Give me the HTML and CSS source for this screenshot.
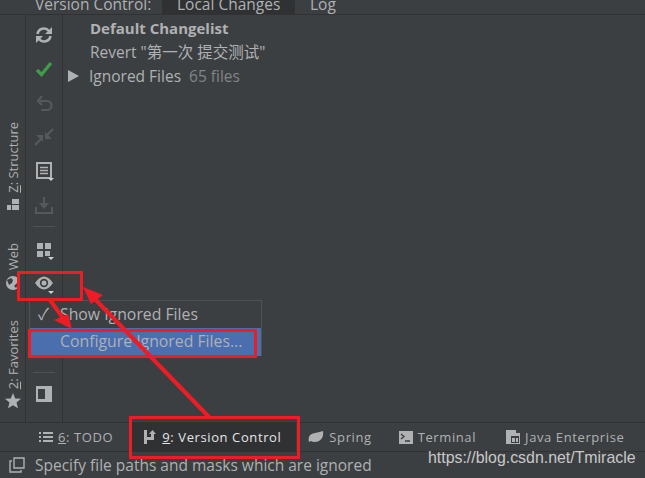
FILE: index.html
```html
<!DOCTYPE html>
<html lang="en">
<head>
<meta charset="utf-8">
<title>Version Control</title>
<link rel="stylesheet" href="styles.css">
</head>
<body>
<div class="ide">
  <header class="tabs">
    <span class="tab-title">Version Control:</span>
    <span class="tab active">Local Changes</span>
    <span class="tab">Log</span>
  </header>
  <div class="middle">
    <aside class="side">
      <div class="side-item structure">
        <svg width="14" height="14" viewBox="0 0 14 14" fill="#afb1b3"><path d="M6 1h7v5H6zM1 7h4v5H1zM6 7h7v5H6z"/></svg>
        <span class="vtext"><u>Z</u>: Structure</span>
      </div>
      <div class="side-item web">
        <svg width="16" height="16" viewBox="0 0 16 16"><circle cx="8" cy="8" r="7" fill="#afb1b3"/><path fill="#3c3f41" d="M2 5l4-2 2 2-1 3-3 2zM9 11l4-4 1 2-3 4z"/></svg>
        <span class="vtext">Web</span>
      </div>
      <div class="side-item favs">
        <svg width="16" height="16" viewBox="0 0 16 16"><path fill="#afb1b3" d="M8 0l2.200 5.400 5.800.4-4.500 3.700 1.500 5.700L8 12.200 3 15.200l1.500-5.700L0 5.800l5.800-.4z"/></svg>
        <span class="vtext"><u>2</u>: Favorites</span>
      </div>
    </aside>
    <nav class="tools">
      <svg width="20" height="20" viewBox="0 0 20 20" fill="none" stroke="#afb1b3" stroke-width="2.600"><path d="M3.500 9a6.500 6.500 0 0 1 11.500-3M16.500 11a6.500 6.500 0 0 1-11.500 3"/><path fill="#afb1b3" stroke="none" d="M18 2v7h-7zM2 18v-7h7z"/></svg>
      <svg width="20" height="20" viewBox="0 0 20 20" fill="none" stroke="#3f9c4b" stroke-width="3.200"><path d="M3 11l4.500 4.500L17 4"/></svg>
      <svg width="20" height="20" viewBox="0 0 20 20" fill="none" stroke="#56595b" stroke-width="2.200"><path d="M6 8h7a4 4 0 0 1 0 9H7"/><path d="M8 3L4 8l4 4"/></svg>
      <svg width="20" height="20" viewBox="0 0 20 20" fill="#56595b"><path d="M9 8v7L2 8zM11 12V5l7 7z"/><path fill="none" stroke="#56595b" stroke-width="2.400" d="M1 18l6-6M19 2l-6 6"/></svg>
      <svg width="20" height="20" viewBox="0 0 20 20" fill="none" stroke="#afb1b3" stroke-width="2"><path d="M3 2h14v15H3z"/><path stroke-width="1.500" d="M6 6.500h8M6 9.500h8M6 12.500h8"/><path fill="#d0d0d0" stroke="none" d="M14 17h6l-3 3z"/></svg>
      <svg width="20" height="20" viewBox="0 0 20 20" fill="none" stroke="#56595b" stroke-width="2"><path d="M2 12v6h16v-6M10 2v9"/><path fill="#56595b" stroke="none" d="M5 8h10l-5 6z"/></svg>
      <span class="sep"></span>
      <svg width="20" height="20" viewBox="0 0 20 20" fill="#afb1b3"><path d="M3 3h6v6H3zM11 3h6v6h-6zM3 11h6v6H3zM11 11h5v5h-5z"/><path fill="#d0d0d0" d="M14 17h6l-3 3z"/></svg>
      <svg width="20" height="20" viewBox="0 0 20 20"><path fill="#afb1b3" d="M1 9q9-13 18 0q-9 13-18 0z"/><circle cx="10" cy="9" r="4.200" fill="#3c3f41"/><circle cx="10" cy="9" r="2.500" fill="#afb1b3"/><path fill="#d0d0d0" d="M14 17h6l-3 3z"/></svg>
      <span class="sep last"></span>
      <svg width="20" height="20" viewBox="0 0 20 20"><path fill="#afb1b3" d="M2 2h16v16H2z"/><path fill="#3c3f41" d="M4 5h7v10H4z"/></svg>
    </nav>
    <main class="tree">
      <div class="row strong">Default Changelist</div>
      <div class="row">Revert "第一次 提交测试"</div>
      <div class="row ignored"><span class="arrow"></span>Ignored Files <span class="dim">65 files</span></div>
    </main>
    <div class="popup">
      <div class="menu-item"><span class="tick">✓</span>Show Ignored Files</div>
      <div class="menu-item selected">Configure Ignored Files...</div>
    </div>
    <span class="mark mark-eye"></span>
    <span class="mark mark-menu"></span>
  </div>
  <div class="toolbar">
    <span class="tool-tab todo">
      <svg width="14" height="12" viewBox="0 0 14 12" fill="#afb1b3"><path d="M0 1h2v2H0zM4 1h10v2H4zM0 5h2v2H0zM4 5h10v2H4zM0 9h2v2H0zM4 9h10v2H4z"/></svg>
      <span><u>6</u>: TODO</span>
    </span>
    <span class="tool-tab vc">
      <svg width="14" height="14" viewBox="0 0 14 14" fill="#afb1b3"><path d="M1 0h3v14H1zM4 7h4V4H6l3.500-4L13 4h-2v6H4z"/></svg>
      <span><u>9</u>: Version Control</span>
    </span>
    <span class="tool-tab">
      <svg width="16" height="12" viewBox="0 0 16 12"><path fill="#afb1b3" d="M1 11Q-1 3 7 2q5-1 8-2 1 7-4 10-5 2-8 0z"/></svg>
      <span>Spring</span>
    </span>
    <span class="tool-tab terminal">
      <svg width="14" height="13" viewBox="0 0 14 13"><path fill="#afb1b3" d="M0 0h14v13H0z"/><path fill="none" stroke="#3c3f41" stroke-width="1.300" d="M2 3l3 2.500L2 8M6 10h5"/></svg>
      <span>Terminal</span>
    </span>
    <span class="tool-tab">
      <svg width="14" height="14" viewBox="0 0 14 14"><path fill="#afb1b3" d="M0 0h10v3h4v11H0z"/><path fill="#3c3f41" d="M5 6h8v7H5z"/><path fill="#afb1b3" d="M6 8h3v4H6zM10 8h2v4h-2z"/></svg>
      <span>Java Enterprise</span>
    </span>
  </div>
  <footer class="status">
    <svg width="16" height="16" viewBox="0 0 16 16" fill="none" stroke="#afb1b3" stroke-width="1.400"><path d="M5 1h10v10H5zM3 4H1v11h11v-2"/></svg>
    <span>Specify file paths and masks which are ignored</span>
    <span class="watermark">https://blog.csdn.net/Tmiracle</span>
  </footer>
  <span class="mark mark-vc"></span>
  <svg class="arrows" width="645" height="478" viewBox="0 0 645 478" fill="none" stroke="#ee1c25" stroke-width="4">
    <path d="M209 417L90 294"/>
    <path fill="#ee1c25" stroke="none" d="M83 287l20 8-12 9z"/>
    <path d="M50 300L68 325"/>
    <path fill="#ee1c25" stroke="none" d="M72 329l-18-9 14-6z"/>
  </svg>
</div>
</body>
</html>
```
FILE: styles.css
```css
* { box-sizing: border-box; }
html, body { margin: 0; padding: 0; }
body { width: 645px; height: 478px; overflow: hidden; background: #3c3f41; font-family: "Open Sans", "Noto Sans CJK SC", sans-serif; color: #afb1b3; }
.ide { position: relative; width: 645px; height: 478px; display: flex; flex-direction: column; }
.tabs { height: 15px; flex: none; display: flex; align-items: flex-end; border-bottom: 1px solid #323232; font-size: 15.5px; line-height: 20px; overflow: hidden; }
.tab-title { width: 162px; padding-left: 35px; white-space: nowrap; flex: none; }
.tab { padding: 0 15px; white-space: nowrap; }
.tab.active { background: #2f3133; width: 133px; }
.middle { position: relative; flex: 1; display: flex; min-height: 0; border-bottom: 1px solid #323232; }
.side { width: 26px; flex: none; border-right: 1px solid #323232; display: flex; flex-direction: column; }
.side-item { display: flex; flex-direction: column-reverse; align-items: center; gap: 5px; }
.structure { margin-top: 107px; }
.web { margin-top: 31px; }
.favs { margin-top: 29px; gap: 4px; }
.vtext { writing-mode: vertical-rl; transform: rotate(180deg); font-size: 13px; line-height: 14px; white-space: nowrap; }
.tools { width: 37px; flex: none; border-right: 1px solid #323232; display: flex; flex-direction: column; align-items: center; padding: 10px 0 18px; gap: 14px; }
.tools svg { flex: none; }
.sep { width: 22px; height: 1px; background: #515151; flex: none; margin: -3px 0 -1px; }
.sep.last { margin: auto 0 -3px; }
.tree { flex: 1; padding: 1px 0 0 27px; font-size: 15.500px; line-height: 24px; }
.row { height: 24px; white-space: nowrap; }
.strong { font-weight: 700; font-size: 15px; }
.ignored { position: relative; margin-left: -1px; }
.arrow { position: absolute; left: -21px; top: 6px; width: 0; height: 0; border-left: 11px solid #afb1b3; border-top: 6px solid transparent; border-bottom: 6px solid transparent; }
.dim { color: #808486; margin-left: 4px; }
.popup { position: absolute; left: 29px; top: 285px; width: 233px; height: 56px; background: #3c3f41; border: 1px solid #515151; font-size: 15.800px; }
.menu-item { height: 27px; line-height: 27px; padding-left: 30px; white-space: nowrap; position: relative; }
.selected { background: #4b6eaf; height: 28px; }
.tick { position: absolute; left: 8px; top: 0; font-size: 16px; }
.mark { position: absolute; border: 3px solid #ee1c25; }
.mark-eye { left: 17px; top: 256px; width: 66px; height: 30px; }
.mark-menu { left: 28px; top: 314px; width: 229px; height: 29px; }
.mark-vc { left: 129px; top: 416px; width: 171px; height: 43px; }
.toolbar { height: 29px; flex: none; display: flex; align-items: center; border-bottom: 1px solid #323232; font-size: 13px; letter-spacing: .6px; padding-left: 39px; }
.tool-tab { display: flex; align-items: center; gap: 5px; height: 100%; white-space: nowrap; margin-right: 27px; }
.todo { margin-right: 16px; }
.terminal { margin-right: 30px; }
.vc { background: #2f3133; color: #e6e6e6; padding: 0 15px 0 14px; margin-right: 12px; }
.status { height: 26px; flex: none; display: flex; align-items: center; gap: 10px; padding-left: 9px; font-size: 15.500px; position: relative; }
.watermark { position: absolute; left: 428px; top: -4px; font-family: "Liberation Sans", sans-serif; font-size: 15.900px; color: #c8c8c8; line-height: 20px; }
.arrows { position: absolute; left: 0; top: 0; pointer-events: none; }
```
